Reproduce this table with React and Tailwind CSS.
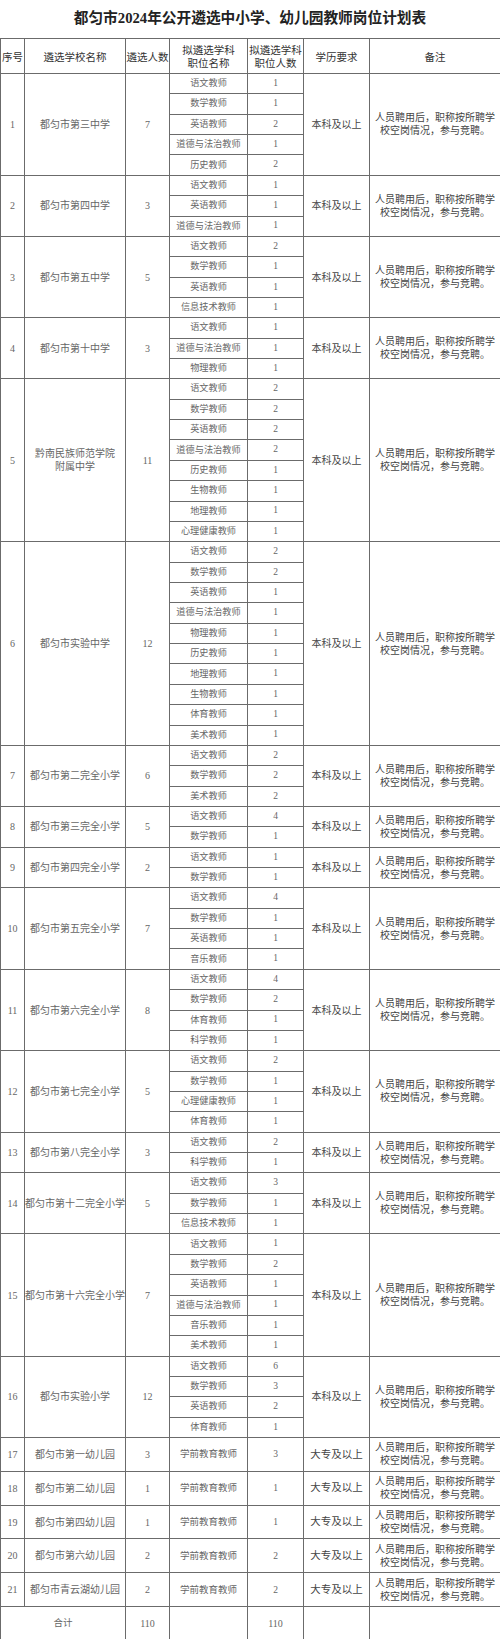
import React from 'react';

const NOTE = ['人员聘用后，职称按所聘学', '校空岗情况，参与竞聘。'];

const schools = [
  { name: ['都匀市第三中学'], total: 7, subjects: [['语文教师', 1], ['数学教师', 1], ['英语教师', 2], ['道德与法治教师', 1], ['历史教师', 2]] },
  { name: ['都匀市第四中学'], total: 3, subjects: [['语文教师', 1], ['英语教师', 1], ['道德与法治教师', 1]] },
  { name: ['都匀市第五中学'], total: 5, subjects: [['语文教师', 2], ['数学教师', 1], ['英语教师', 1], ['信息技术教师', 1]] },
  { name: ['都匀市第十中学'], total: 3, subjects: [['语文教师', 1], ['道德与法治教师', 1], ['物理教师', 1]] },
  {
    name: ['黔南民族师范学院', '附属中学'], total: 11,
    subjects: [['语文教师', 2], ['数学教师', 2], ['英语教师', 2], ['道德与法治教师', 2], ['历史教师', 1], ['生物教师', 1], ['地理教师', 1], ['心理健康教师', 1]],
  },
  {
    name: ['都匀市实验中学'], total: 12,
    subjects: [['语文教师', 2], ['数学教师', 2], ['英语教师', 1], ['道德与法治教师', 1], ['物理教师', 1], ['历史教师', 1], ['地理教师', 1], ['生物教师', 1], ['体育教师', 1], ['美术教师', 1]],
  },
  { name: ['都匀市第二完全小学'], total: 6, subjects: [['语文教师', 2], ['数学教师', 2], ['美术教师', 2]] },
  { name: ['都匀市第三完全小学'], total: 5, subjects: [['语文教师', 4], ['数学教师', 1]] },
  { name: ['都匀市第四完全小学'], total: 2, subjects: [['语文教师', 1], ['数学教师', 1]] },
  { name: ['都匀市第五完全小学'], total: 7, subjects: [['语文教师', 4], ['数学教师', 1], ['英语教师', 1], ['音乐教师', 1]] },
  { name: ['都匀市第六完全小学'], total: 8, subjects: [['语文教师', 4], ['数学教师', 2], ['体育教师', 1], ['科学教师', 1]] },
  { name: ['都匀市第七完全小学'], total: 5, subjects: [['语文教师', 2], ['数学教师', 1], ['心理健康教师', 1], ['体育教师', 1]] },
  { name: ['都匀市第八完全小学'], total: 3, subjects: [['语文教师', 2], ['科学教师', 1]] },
  { name: ['都匀市第十二完全小学'], total: 5, subjects: [['语文教师', 3], ['数学教师', 1], ['信息技术教师', 1]] },
  {
    name: ['都匀市第十六完全小学'], total: 7,
    subjects: [['语文教师', 1], ['数学教师', 2], ['英语教师', 1], ['道德与法治教师', 1], ['音乐教师', 1], ['美术教师', 1]],
  },
  { name: ['都匀市实验小学'], total: 12, subjects: [['语文教师', 6], ['数学教师', 3], ['英语教师', 2], ['体育教师', 1]] },
];

const kindergartens = [
  ['都匀市第一幼儿园', 3],
  ['都匀市第二幼儿园', 1],
  ['都匀市第四幼儿园', 1],
  ['都匀市第六幼儿园', 2],
  ['都匀市青云湖幼儿园', 2],
];

const cell = 'border border-[#6b6b6b] p-0 text-center align-middle';
const gray = 'text-[#666]';
const dark = 'text-[#444]';

function Note() {
  return (
    <td className={`${cell} ${dark} text-[10px] leading-[13px]`}>
      {NOTE[0]}
      <br />
      {NOTE[1]}
    </td>
  );
}

export default function App() {
  return (
    <div className="w-[500px] bg-white font-['Liberation_Serif','Noto_Sans_CJK_SC',serif]">
      <div className="h-[38px] flex items-center justify-center pb-[1px]">
        <h1 className="text-[14.7px] font-bold text-[#222] whitespace-nowrap">
          都匀市2024年公开遴选中小学、幼儿园教师岗位计划表
        </h1>
      </div>

      <table className="w-[500px] table-fixed border-collapse">
        <colgroup>
          <col className="w-[24px]" />
          <col className="w-[101px]" />
          <col className="w-[44px]" />
          <col className="w-[78px]" />
          <col className="w-[56px]" />
          <col className="w-[66px]" />
          <col className="w-[131px]" />
        </colgroup>
        <thead>
          <tr className="h-[35px] font-['Noto_Sans_CJK_SC',sans-serif] text-[10.5px] leading-[13px] text-[#333]">
            <th className={`${cell} font-normal`}>序号</th>
            <th className={`${cell} font-normal`}>遴选学校名称</th>
            <th className={`${cell} font-normal`}>遴选人数</th>
            <th className={`${cell} font-normal`}>拟遴选学科<br />职位名称</th>
            <th className={`${cell} font-normal`}>拟遴选学科<br />职位人数</th>
            <th className={`${cell} font-normal`}>学历要求</th>
            <th className={`${cell} font-normal`}>备注</th>
          </tr>
        </thead>
        <tbody>
          {schools.map((school, i) =>
            school.subjects.map(([subject, count], j) => (
              <tr key={`${i}-${j}`} className="h-[20.36px]">
                {j === 0 && (
                  <>
                    <td rowSpan={school.subjects.length} className={`${cell} ${gray} text-[10px]`}>{i + 1}</td>
                    <td rowSpan={school.subjects.length} className={`${cell} ${gray} text-[10px] leading-[13px]`}>
                      {school.name.map((line, k) => (
                        <div key={k}>{line}</div>
                      ))}
                    </td>
                    <td rowSpan={school.subjects.length} className={`${cell} ${gray} text-[10px]`}>{school.total}</td>
                  </>
                )}
                <td className={`${cell} ${gray} text-[9.2px] leading-none`}>{subject}</td>
                <td className={`${cell} ${gray} text-[9.5px] leading-none`}>{count}</td>
                {j === 0 && (
                  <>
                    <td rowSpan={school.subjects.length} className={`${cell} ${dark} text-[10px]`}>本科及以上</td>
                    <td rowSpan={school.subjects.length} className={`${cell} ${dark} text-[10px] leading-[13px]`}>
                      {NOTE[0]}
                      <br />
                      {NOTE[1]}
                    </td>
                  </>
                )}
              </tr>
            ))
          )}
          {kindergartens.map(([name, count], i) => (
            <tr key={name} className="h-[33.8px]">
              <td className={`${cell} ${gray} text-[10px]`}>{17 + i}</td>
              <td className={`${cell} ${gray} text-[10px]`}>{name}</td>
              <td className={`${cell} ${gray} text-[10px]`}>{count}</td>
              <td className={`${cell} ${gray} text-[9.5px]`}>学前教育教师</td>
              <td className={`${cell} ${gray} text-[9.5px]`}>{count}</td>
              <td className={`${cell} ${dark} text-[10.5px]`}>大专及以上</td>
              <Note />
            </tr>
          ))}
          <tr className="h-[33px]">
            <td colSpan={2} className={`${cell} ${gray} text-[9.5px]`}>合计</td>
            <td className={`${cell} ${gray} text-[10px]`}>110</td>
            <td className={cell}></td>
            <td className={`${cell} ${gray} text-[10px]`}>110</td>
            <td className={cell}></td>
            <td className={cell}></td>
          </tr>
        </tbody>
      </table>
    </div>
  );
}
